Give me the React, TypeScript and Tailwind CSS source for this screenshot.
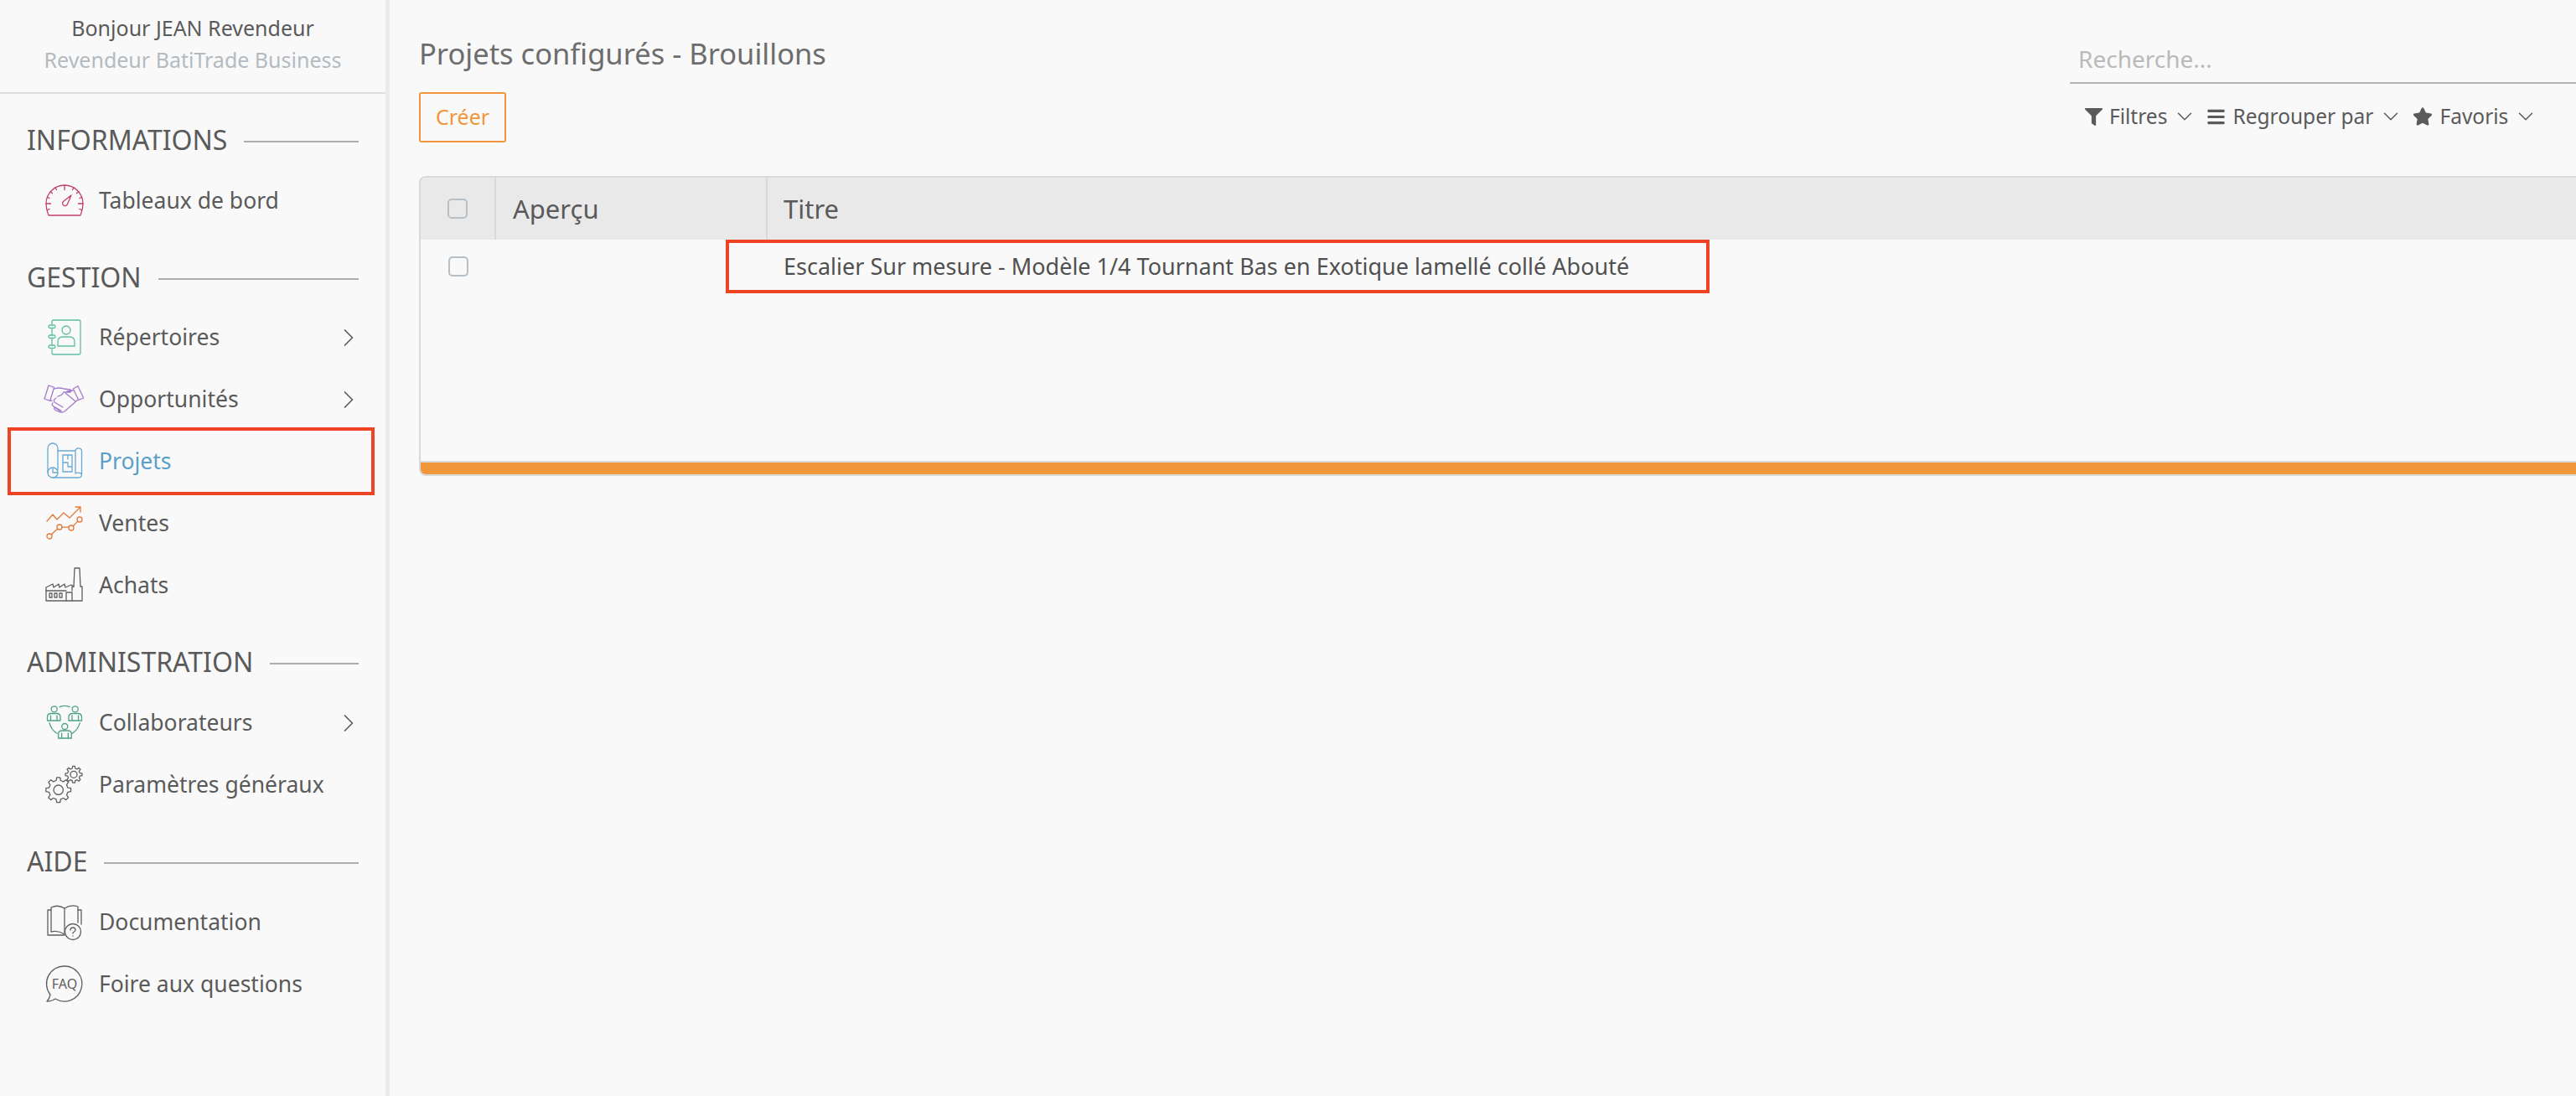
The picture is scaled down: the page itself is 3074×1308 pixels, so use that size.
import { ChevronDown, ChevronRight } from 'lucide-react';
import { FaBars, FaFilter, FaStar } from 'react-icons/fa';
import type { ReactNode } from 'react';

// line icons of the side menu, all on the same 46x46 box
function Icon({ color, children }: { color: string; children: ReactNode }) {
  return (
    <svg width="46" height="46" viewBox="0 0 46 46" fill="none" stroke={color} strokeWidth="1.3" strokeLinecap="round" strokeLinejoin="round" overflow="visible" className="shrink-0">
      {children}
    </svg>
  );
}

function gearPath(cx: number, cy: number, outer: number, inner: number, teeth: number) {
  const step = (Math.PI * 2) / teeth;
  const pt = (r: number, a: number) => `${(cx + r * Math.cos(a)).toFixed(2)} ${(cy + r * Math.sin(a)).toFixed(2)}`;
  let d = '';
  for (let i = 0; i < teeth; i++) {
    const a = i * step;
    d += `${i === 0 ? 'M' : 'L'}${pt(inner, a - step * 0.3)}L${pt(outer, a - step * 0.17)}L${pt(outer, a + step * 0.17)}L${pt(inner, a + step * 0.3)}`;
  }
  return d + 'Z';
}

const gaugeTicks = [-180, -160, -140, -120, -90, -60, -40, -20, 0, 20, 160].map((deg) => {
  const a = (deg * Math.PI) / 180;
  const long = deg === -90 || deg === 0 || deg === -180;
  const r = long ? 16.5 : 19;
  return `M${(23 + 22 * Math.cos(a)).toFixed(2)} ${(27 + 22 * Math.sin(a)).toFixed(2)}L${(23 + r * Math.cos(a)).toFixed(2)} ${(27 + r * Math.sin(a)).toFixed(2)}`;
});

const GaugeIcon = () => (
  <Icon color="#c23f6d">
    <path d="M4 41C2 36 1 32 1 27A22 22 0 0 1 45 27C45 32 44 36 42 41Z" />
    <path d={gaugeTicks.join('')} />
    <path d="M31 17 26.500 27.500a3 3 0 1 1-5-3Z" />
  </Icon>
);

const ContactIcon = () => (
  <Icon color="#5fbfa5">
    <path d="M8 8V5Q8 3 10 3H40Q42 3 42 5V42Q42 44 40 44H10Q8 44 8 42V38M8 13V21M8 25V33" />
    <rect x="4" y="9" width="8" height="3.500" rx="1.750" />
    <rect x="4" y="21" width="8" height="3.500" rx="1.750" />
    <rect x="4" y="33" width="8" height="3.500" rx="1.750" />
    <circle cx="25" cy="15" r="5" />
    <path d="M15 34V29Q15 23 21 23H29Q35 23 35 29V34Z" />
  </Icon>
);

const HandshakeIcon = () => (
  <Icon color="#a47ccb">
    <path d="M4 7 10.700 9.300 5.700 25.300-1 23ZM39 7.700 33.300 11 39.700 24.300 45.700 22Z" />
    <path d="M11 11Q17 9 22 11L30 12Q32 13 30 15L22 15Q20 19 15 20M33 13 26 14" />
    <path d="M39 24 23 38Q20 40 18 38L11 33M24 16 36 26" />
    <path d="M13 22Q9 24 11 27L21 33M9 28Q7 30 10 32L19 37M11 33Q10 36 13 37L18 39M8 25H6" />
  </Icon>
);

const PlanIcon = () => (
  <Icon color="#69a9d1">
    <path d="M3 37V8A6 6 0 0 1 15 8V34" />
    <circle cx="9" cy="37" r="6" />
    <path d="M9 32V37H15M15 11H36M9 43H40Q43.500 43 43.500 39V11A3.800 3.800 0 0 0 36 11V38Q41 36 43.500 39" />
    <path d="M21 16H32V36H21ZM21 25H27M27 16V21M27 30H32M27 25V30" />
  </Icon>
);

const SalesIcon = () => (
  <Icon color="#e07c3c">
    <path d="M2 21 9 13 14 19 22 11 29 17 42 4M36 4H42V10" />
    <circle cx="5" cy="39" r="3" />
    <circle cx="17" cy="28" r="3" />
    <circle cx="31" cy="29" r="3" />
    <circle cx="41" cy="19" r="3" />
    <path d="M7 37 15 30M20 28.200H28M33 27 39 21" />
  </Icon>
);

const FactoryIcon = () => (
  <Icon color="#5f5f5f">
    <path d="M1 42V26L9 22 10 26 16 22 17 26 23 22 24 26 31 23 34 25 35 3H41L42 25H44V42Z" />
    <path d="M1 30H25M25 42V32H32V42M32 30V25H34" />
    <path d="M5 33h3v5H5ZM11 33h3v5h-3ZM17 33h3v5h-3Z" />
  </Icon>
);

const PeopleIcon = () => (
  <Icon color="#4fa283">
    <circle cx="10.700" cy="7.300" r="3.500" />
    <circle cx="35.700" cy="7.300" r="3.500" />
    <circle cx="23.300" cy="28" r="3.500" />
    <path d="M2.500 21V17Q2.500 12.500 7 12.500H14Q18 12.500 18 17V21ZM6.500 15V21M14 15V21" />
    <path d="M28 21V17Q28 12.500 32.500 12.500H39Q43.500 12.500 43.500 17V21ZM32 15V21M39.500 15V21" />
    <path d="M15.700 42V37Q15.700 33 20 33H27Q31.300 33 31.300 37V42ZM19.700 36V42M27.300 36V42" />
    <path d="M17.300 4.700Q23 2 29 4.700M5 23.700Q7 32 14 36.300M41.300 23.700Q39 32 32.300 36.300" />
  </Icon>
);

const GearsIcon = () => (
  <Icon color="#5f5f5f">
    <path d={gearPath(15.7, 29.7, 15, 11.5, 8)} />
    <circle cx="15.700" cy="29.700" r="5.700" />
    <path d={gearPath(34, 11.3, 10, 7.5, 8)} />
    <circle cx="34" cy="11.300" r="4" />
  </Icon>
);

const BookIcon = () => (
  <Icon color="#5f5f5f">
    <path d="M7 6Q15 2 23 7Q31 2 39 5V24M23 7V37M7 6V35Q15 33 23 38" />
    <path d="M7 9H3V39H23M39 9H43V26" />
    <circle cx="33" cy="35" r="9.500" fill="#f9f9f9" />
    <path d="M30 33Q30 30 33 30 36 30 36 33 36 34.500 33 36V37M33 40V40.200" />
  </Icon>
);

const FaqIcon = () => (
  <Icon color="#5f5f5f">
    <path d="M23 2A21 21 0 1 1 12 41Q8 44 2 44 5 41 6 36A21 21 0 0 1 23 2Z" />
    <text x="23" y="28.500" textAnchor="middle" stroke="none" fill="#5f5f5f" className="text-[16px]">FAQ</text>
  </Icon>
);

function SectionTitle({ label, className }: { label: string; className: string }) {
  return (
    <div className={`flex h-[44px] items-center pl-[32px] pr-[32px] ${className}`}>
      <span className="text-[32px] text-[#5a5a5a]">{label}</span>
      <span className="ml-[20px] mt-[3px] h-[2px] flex-1 bg-[#adadad]" />
    </div>
  );
}

function MenuItem({ icon, label, arrow, active }: { icon: ReactNode; label: string; arrow?: boolean; active?: boolean }) {
  return (
    <div className={`relative flex h-[74px] items-center pl-[54px] pr-[26px] ${active ? 'text-[#5a9fc9]' : 'text-[#5a5a5a]'}`}>
      {icon}
      <span className="ml-[18px] flex-1 pt-[2px] text-[26.500px]">{label}</span>
      {arrow && <ChevronRight size={36} strokeWidth={1.1} className="mt-[2px] text-[#5a5a5a]" />}
      {active && <div className="absolute left-[9px] top-[-3px] h-[81px] w-[438px] border-[4px] border-[#ee4423]" />}
    </div>
  );
}

function CheckBox() {
  return <span className="block h-[24px] w-[24px] rounded-[5px] border-2 border-[#b6bfc6]" />;
}

function FilterButton({ icon, label }: { icon: ReactNode; label: string }) {
  return (
    <div className="flex items-center">
      {icon}
      <span className="ml-[8px] text-[24.500px] text-[#5a5a5a]">{label}</span>
      <ChevronDown size={30} strokeWidth={1.2} className="ml-[6px] text-[#5a5a5a]" />
    </div>
  );
}

export default function App() {
  return (
    <div className="flex h-[1308px] w-[3074px] overflow-hidden bg-[#f9f9f9] font-['Noto_Sans',sans-serif]">
      {/* Side menu */}
      <aside className="w-[465px] shrink-0 border-r-[5px] border-[#ebebeb]">
        <div className="flex h-[112px] flex-col items-center border-b-2 border-[#dedede] pt-[14px] text-[25px] leading-[38px]">
          <span className="text-[#5a5a5a]">Bonjour JEAN Revendeur</span>
          <span className="text-[#b3bbc1]">Revendeur BatiTrade Business</span>
        </div>
        <SectionTitle label="INFORMATIONS" className="mt-[33px] mb-[13px]" />
        <MenuItem icon={<GaugeIcon />} label="Tableaux de bord" />
        <SectionTitle label="GESTION" className="mt-[33px] mb-[12px]" />
        <MenuItem icon={<ContactIcon />} label="Répertoires" arrow />
        <MenuItem icon={<HandshakeIcon />} label="Opportunités" arrow />
        <MenuItem icon={<PlanIcon />} label="Projets" active />
        <MenuItem icon={<SalesIcon />} label="Ventes" />
        <MenuItem icon={<FactoryIcon />} label="Achats" />
        <SectionTitle label="ADMINISTRATION" className="mt-[33px] mb-[13px]" />
        <MenuItem icon={<PeopleIcon />} label="Collaborateurs" arrow />
        <MenuItem icon={<GearsIcon />} label="Paramètres généraux" />
        <SectionTitle label="AIDE" className="mt-[33px] mb-[13px]" />
        <MenuItem icon={<BookIcon />} label="Documentation" />
        <MenuItem icon={<FaqIcon />} label="Foire aux questions" />
      </aside>

      {/* Main content */}
      <main className="min-w-0 flex-1 pl-[35px]">
        <div className="flex h-[210px] justify-between">
          <div className="pt-[42px]">
            <h1 className="h-[44px] text-[34.500px] leading-[44px] text-[#6d6d6d]">Projets configurés - Brouillons</h1>
            <button className="mt-[24px] h-[60px] w-[104px] rounded-[3px] border-2 border-[#f1963a] text-[25px] text-[#f1963a]">Créer</button>
          </div>
          <div className="w-[604px] pt-[44px]">
            <div className="flex h-[56px] items-center border-b-2 border-[#b4b4b4] pb-[3px] pl-[10px] text-[28px] text-[#b9b9b9]">Recherche...</div>
            <div className="mt-[21px] flex items-center gap-[11px] pl-[18px]">
              <FilterButton icon={<FaFilter size={21} className="text-[#5a5a5a]" />} label="Filtres" />
              <FilterButton icon={<FaBars size={23} className="text-[#5a5a5a]" />} label="Regrouper par" />
              <FilterButton icon={<FaStar size={24} className="text-[#5a5a5a]" />} label="Favoris" />
            </div>
          </div>
        </div>

        <div className="-mr-[8px] overflow-hidden rounded-l-[8px] border-2 border-[#d9d9d9]">
          <div className="flex h-[74px] bg-[#e9e9e9] text-[31px] text-[#5a5a5a]">
            <div className="flex w-[90px] items-center justify-center border-r-2 border-[#d9d9d9]">
              <CheckBox />
            </div>
            <div className="flex w-[324px] items-center border-r-2 border-[#d9d9d9] pl-[20px]">Aperçu</div>
            <div className="flex items-center pl-[19px]">Titre</div>
          </div>
          <div className="h-[264px]">
            <div className="relative flex h-[64px] items-center text-[27px] text-[#505050]">
              <div className="flex w-[90px] justify-center">
                <CheckBox />
              </div>
              <div className="w-[324px]" />
              <div className="pl-[19px]">Escalier Sur mesure - Modèle 1/4 Tournant Bas en Exotique lamellé collé Abouté</div>
              <div className="absolute left-[364px] top-0 h-[64px] w-[1174px] border-[4px] border-[#ee4423]" />
            </div>
          </div>
          <div className="h-[16px] border-t-2 border-[#d9d9d9] bg-[#f0973a]" />
        </div>
      </main>
    </div>
  );
}
